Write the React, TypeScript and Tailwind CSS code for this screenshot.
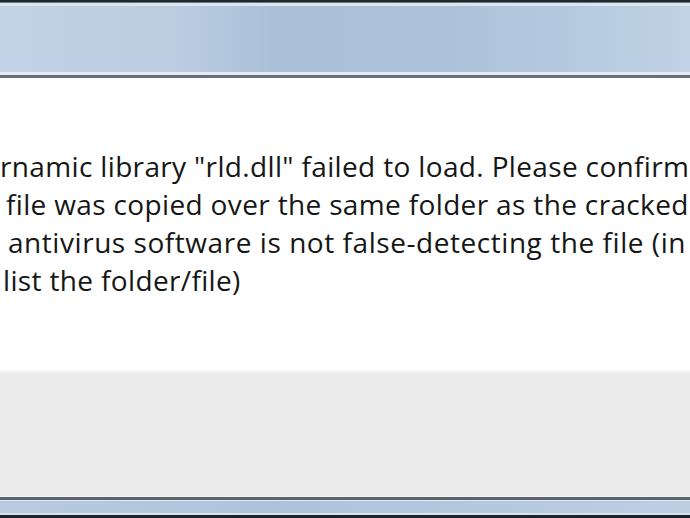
export default function App() {
  const lines = [
    { t: 'rnamic library "rld.dll" failed to load. Please confirm', pl: 'pl-[0px]' },
    { t: 'file was copied over the same folder as the cracked', pl: 'pl-[6px]' },
    { t: 'antivirus software is not false-detecting the file (in', pl: 'pl-[8px] tracking-[0.55px]' },
    { t: 'list the folder/file)', pl: 'pl-[3px]' },
  ];
  return (
    <div className="w-[690px] h-[518px] overflow-hidden flex flex-col bg-white">
      <div className="h-[2px] bg-[#1f2a2e]" />
      <div className="h-[1px] bg-[#6d7a82]" />
      <div className="h-[3px] bg-[#dce6ef]" />
      <div className="h-[66px] bg-[linear-gradient(90deg,#c2d2e6_0%,#bccde2_25%,#a9c0d8_40%,#acc2da_65%,#b6cbe0_85%,#c0d2e5_100%)]" />
      <div className="h-[3px] bg-[#e4ecf2]" />
      <div className="h-[3px] bg-[#66707a]" />
      <div className="h-[292px] bg-white pt-[69px] overflow-hidden">
        <div
          className="text-[28px] leading-[38px] tracking-[0.35px] font-medium text-[#161616] whitespace-nowrap"
          style={{ fontFamily: '"Open Sans", "Noto Sans", sans-serif' }}
        >
          {lines.map((l, i) => (
            <div key={i} className={l.pl}>
              {l.t}
            </div>
          ))}
        </div>
      </div>
      <div className="h-[2px] bg-[#f4f4f4]" />
      <div className="h-[124px] bg-[#ececec]" />
      <div className="h-[1px] bg-[#f3f3f3]" />
      <div className="h-[3px] bg-[#5a646c]" />
      <div className="h-[1px] bg-[#dde7f0]" />
      <div className="h-[12px] bg-[linear-gradient(90deg,#b8cbe0_0%,#aec3da_40%,#b4c8de_70%,#bccee2_100%)]" />
      <div className="h-[2px] bg-[#d8e2ec]" />
      <div className="h-[3px] bg-[#1c2428]" />
    </div>
  );
}
